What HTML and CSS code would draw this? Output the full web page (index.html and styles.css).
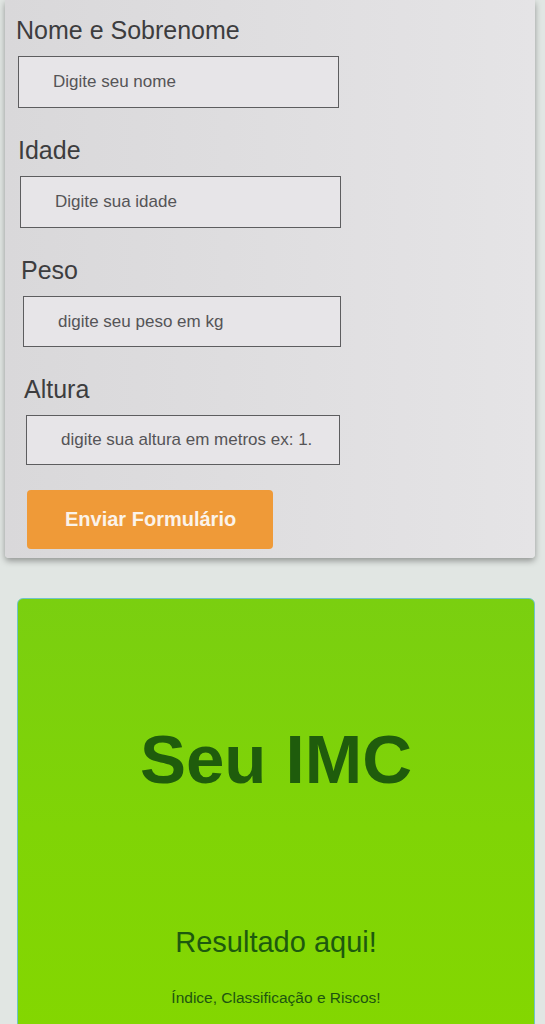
FILE: index.html
```html
<!DOCTYPE html>
<html lang="pt-BR">
<head>
<meta charset="utf-8">
<title>Calculadora IMC</title>
<link rel="stylesheet" href="styles.css">
</head>
<body>
<form class="form-card">
  <label class="field-label" for="nome">Nome e Sobrenome</label>
  <input class="field-input" id="nome" type="text" placeholder="Digite seu nome">
  <label class="field-label" for="idade">Idade</label>
  <input class="field-input" id="idade" type="text" placeholder="Digite sua idade">
  <label class="field-label" for="peso">Peso</label>
  <input class="field-input" id="peso" type="text" placeholder="digite seu peso em kg">
  <label class="field-label" for="altura">Altura</label>
  <input class="field-input" id="altura" type="text" placeholder="digite sua altura em metros ex: 1.">
  <button class="submit-btn" type="button">Enviar Formulário</button>
</form>
<section class="result-card">
  <h1 class="result-title">Seu IMC</h1>
  <p class="result-value">Resultado aqui!</p>
  <p class="result-info">Índice, Classificação e Riscos!</p>
</section>
</body>
</html>
```
FILE: styles.css
```css
* { box-sizing: border-box; }
html, body { margin: 0; padding: 0; }
body {
  background: #e1e6e3;
  font-family: "Liberation Sans", Arial, sans-serif;
  width: 545px;
  height: 1024px;
  overflow: hidden;
}
.form-card {
  display: flex;
  flex-direction: column;
  align-items: flex-start;
  margin: 0 10px 0 5px;
  padding: 16px 12px 9px 11px;
  height: 558px;
  background: linear-gradient(90deg, #d9d8da 0%, #dfdee0 50%, #e5e4e6 100%);
  border-radius: 0 0 4px 4px;
  box-shadow: 0 3px 6px rgba(0,0,0,0.35);
}
.field-label {
  font-size: 25px;
  line-height: 29px;
  color: #3d3d3f;
  margin: 0 0 11px 0;
}
.field-label:nth-of-type(2) { margin-left: 2px; }
.field-label:nth-of-type(3) { margin-left: 5px; }
.field-label:nth-of-type(4) { margin-left: 8px; }
.field-input {
  width: 321px;
  height: 52px;
  margin: 0 0 28px 2px;
  padding: 0 0 0 34px;
  border: 1px solid #5d5d5f;
  background: #e7e5e8;
  font-family: "Liberation Sans", Arial, sans-serif;
  font-size: 17px;
  color: #333;
  outline: none;
}
.field-input::placeholder { color: #555457; }
.field-input:nth-of-type(2) { margin-left: 4px; }
.field-input:nth-of-type(3) { margin-left: 7px; width: 318px; }
.field-input:nth-of-type(4) { margin-left: 10px; width: 314px; height: 50px; margin-bottom: 25px; }
.submit-btn {
  width: 246px;
  height: 59px;
  margin-left: 11px;
  padding: 0 0 0 38px;
  text-align: left;
  border: none;
  border-radius: 4px;
  background: #ef9a38;
  color: #fbf3ea;
  font-family: "Liberation Sans", Arial, sans-serif;
  font-weight: bold;
  font-size: 20px;
}
.result-card {
  display: flex;
  flex-direction: column;
  align-items: center;
  margin: 40px 10px 0 17px;
  padding: 121px 0 0 0;
  height: 460px;
  background: linear-gradient(180deg, #7acf10 0%, #80d406 50%, #84d700 100%);
  border: 1px solid #6fc4c8;
  border-radius: 6px 6px 0 0;
}
.result-title {
  margin: 0;
  font-size: 69px;
  line-height: 80px;
  font-weight: bold;
  color: #1f5c0c;
}
.result-value {
  margin: 125px 0 0 0;
  font-size: 29px;
  line-height: 34px;
  color: #1d5a0e;
}
.result-info {
  margin: 30px 0 0 0;
  font-size: 15.5px;
  line-height: 18px;
  color: #1d5510;
}
```
